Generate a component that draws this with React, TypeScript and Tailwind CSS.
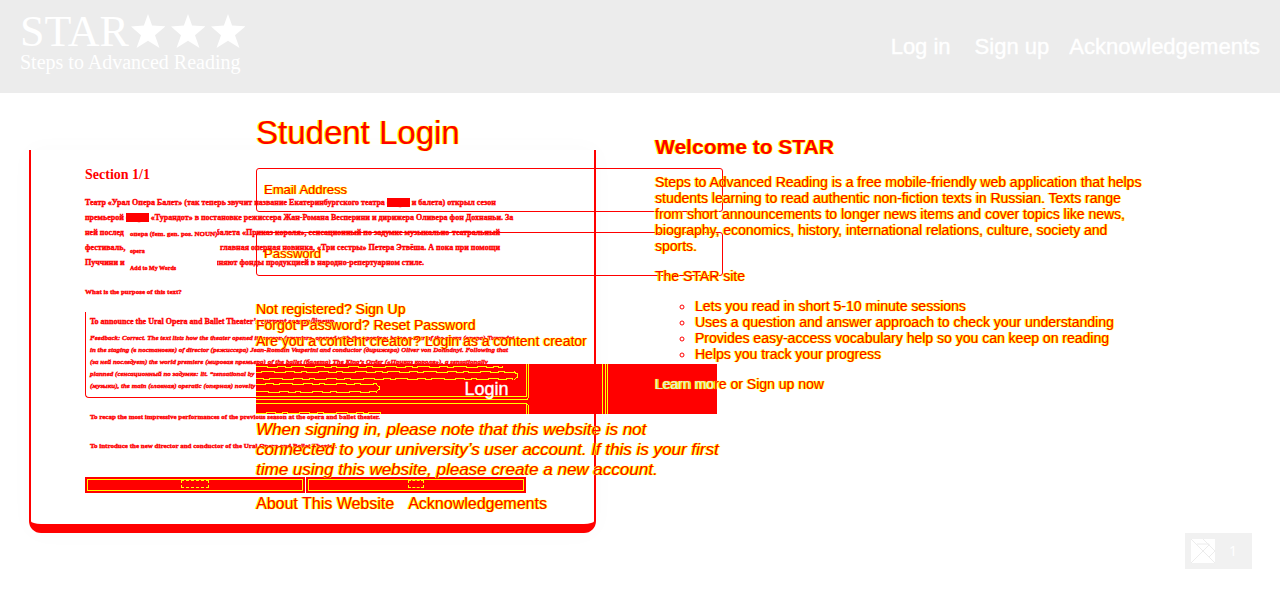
import React from "react";

const glow = "text-[#f00] [text-shadow:1px_0_0_#ff0,-1px_0_0_#ff0,0_0_1px_#ff0]";

function wave(y: number, from: number, to: number, seed: number) {
  let d = `M${from} ${y}`;
  let x = from;
  let i = seed;
  while (x < to) {
    const step = 4 + ((i * 7) % 9);
    const rise = i % 2 === 0 ? -1 : 1;
    x = Math.min(to, x + step);
    d += `H${x}l1 ${rise}`;
    x += 1;
    i += 1;
  }
  return d;
}

const contours = [
  wave(2.5, 0, 246, 1),
  wave(8.5, 0, 258, 4),
  "M258 8.5l3 1v4l-3 2",
  wave(14.5, 0, 257, 3),
  wave(20.5, 0, 120, 2),
  "M120 20.5l3 2v3l-3 2",
  wave(27.5, 0, 120, 5),
  wave(49.5, 0, 124, 6),
  "M0 32.5H270.5V0",
  "M0 35.5H271l1.500-2V0",
  "M0 39.5H270.5V50",
  "M270 39.5l2.500 2V50",
  "M346.500 0V50M349.500 0V50M351.500 0V50",
];

function Star() {
  return (
    <svg viewBox="0 0 34 34" className="h-[34px] w-[34px]" fill="#fff" aria-hidden="true">
      <path d="M17 0L21.100 11.500L34.500 12.400L24 21.200L28.500 34L17 26.700L5.500 34L10 21.200L0 12.400L12.900 11.500Z" />
    </svg>
  );
}

function Header() {
  return (
    <header className="flex h-[93px] items-start justify-between bg-[#ececec] px-5 text-white">
      <a href="#home" className="flex flex-col pt-[14px] font-['Liberation_Serif',serif]">
        <span className="flex items-start">
          <span className="w-[111px] text-[44px] leading-9">STAR</span>
          <span className="flex gap-[6px]">
            <Star />
            <Star />
            <Star />
          </span>
        </span>
        <span className="pt-[2px] text-[20px] leading-5">Steps to Advanced Reading</span>
      </a>
      <nav className="flex pt-[34px] text-[22px] leading-[26px] [-webkit-text-stroke:0.4px_#fff]">
        <a href="#login" className="pr-6">Log in</a>
        <a href="#signup" className="pr-5">Sign up</a>
        <a href="#acknowledgements">Acknowledgements</a>
      </nav>
    </header>
  );
}

function Reader() {
  return (
    <section className="mt-[57px] ml-[29px] h-[383px] w-[567px] shrink-0 rounded-b-xl border-x-2 border-b-[9px] border-[#f00] px-[54px] pt-4 font-['Liberation_Serif',serif] font-bold whitespace-nowrap text-[#f00] shadow-[0_0_24px_#fafafa]">
      <h2 className="text-[14px] leading-[18px]">Section 1/1</h2>
      <div className="relative pt-[11px] text-[8px] leading-[15px] [-webkit-text-stroke:0.4px_#f00]">
        <p>Театр «Урал Опера Балет» (так теперь звучит название Екатеринбургского театра <mark className="bg-[#f00] text-[#f00]">оперы</mark> и балета) открыл сезон</p>
        <p>премьерой <mark className="bg-[#f00] text-[#f00]">оперы</mark> «Турандот» в постановке режиссера Жан-Романа Весперини и дирижера Оливера фон Дохнаньи. За</p>
        <p className="flex justify-between pr-10"><span>ней послед</span><span>балета «Приказ короля», сенсационный по задумке музыкально-театральный</span></p>
        <p className="flex justify-between pr-10"><span>фестиваль,</span><span>главная оперная новинка, «Три сестры» Петера Этвёша. А пока при помощи</span></p>
        <p className="flex justify-between pr-[116px]"><span>Пуччини и</span><span>полняют фонды продукцией в народно-репертуарном стиле.</span></p>
        <div className="absolute top-[42px] left-[41px] h-[50px] w-[91px] bg-white pl-1 text-[6px] leading-[17px]">
          <p className="text-[7px]">опера (fem. gen. pos. NOUN)</p>
          <p>opera</p>
          <p>Add to My Words</p>
        </div>
      </div>
      <p className="pt-[15px] text-[7px] leading-[14px] [-webkit-text-stroke:0.4px_#f00]">What is the purpose of this text?</p>
      <div className="mt-[13px] h-[86px] w-[443px] rounded-bl-sm border-b border-l border-[#f00] pt-[3px] pl-1 text-[8px] leading-[12px] [-webkit-text-stroke:0.4px_#f00]">
        <p className="pb-[3px] leading-[14px]">To announce the Ural Opera and Ballet Theater’s current season/lineup.</p>
        <div className="text-[7px] italic">
          <p>Feedback: Correct. The text lists how the theater opened its season (premiere, opened with the opening: being a tour of the opera (опера) Turandot</p>
          <p>in the staging (в постановке) of director (режиссера) Jean-Romain Vesperini and conductor (дирижера) Oliver von Dohnányi. Following that</p>
          <p>(за ней последует) the world premiere (мировая премьера) of the ballet (балета) The King’s Order («Приказ короля»), a sensationally</p>
          <p>planned (сенсационный по задумке: lit. “sensational by</p>
          <p>(музыки), the main (главная) operatic (оперная) novelty</p>
        </div>
      </div>
      <div className="pt-3 pl-[5px] text-[7px] leading-[14px] [-webkit-text-stroke:0.4px_#f00]">
        <p className="pb-[15px]">To recap the most impressive performances of the previous season at the opera and ballet theater.</p>
        <p>To introduce the new director and conductor of the Ural Opera and Ballet Theater.</p>
      </div>
      <div className="flex gap-px pt-6">
        <button type="button" aria-label="Previous" className="flex h-4 w-[220px] justify-center bg-[#f00] p-[2px]">
          <span className="flex h-3 flex-1 justify-center border border-[#ff0]"><span className="h-2 w-7 border border-dashed border-[#ff0]" /></span>
        </button>
        <button type="button" aria-label="Next" className="flex h-4 w-[220px] justify-center bg-[#f00] p-[2px]">
          <span className="flex h-3 flex-1 justify-center border border-[#ff0]"><span className="h-2 w-4 border border-dashed border-[#ff0]" /></span>
        </button>
      </div>
    </section>
  );
}

function Welcome() {
  return (
    <section className={`relative z-20 ml-[59px] max-w-[496px] pt-[41px] text-[14px] leading-4 ${glow}`}>
      <h2 className="pb-[15px] text-[21px] leading-[25px] font-bold">Welcome to STAR</h2>
      <p>
        Steps to Advanced Reading is a free mobile-friendly web application that helps students learning to read authentic non-fiction texts in Russian. Texts range from short announcements to longer news items and cover topics like news, biography, economics, history, international relations, culture, society and sports.
      </p>
      <p className="py-[14px]">The STAR site</p>
      <ul className="list-[circle] pl-10">
        <li>Lets you read in short 5-10 minute sessions</li>
        <li>Uses a question and answer approach to check your understanding</li>
        <li>Provides easy-access vocabulary help so you can keep on reading</li>
        <li>Helps you track your progress</li>
      </ul>
      <p className="pt-[14px]">
        <a href="#about"><span className="text-[#e4e4e4]">Learn mo</span>re</a> or <a href="#signup">Sign up now</a>
      </p>
    </section>
  );
}

const field = "h-11 w-[calc(100%+6px)] rounded-[3px] border border-[#f00] bg-transparent px-[7px] pb-[2px] text-[13px] outline-none placeholder:text-[#f00] placeholder:opacity-100 [text-shadow:1px_0_0_#ff0,-1px_0_0_#ff0,0_0_1px_#ff0]";

function Login() {
  return (
    <section className={`ml-[20%] max-w-[461px] pt-[21px] ${glow}`}>
      <h1 className="text-[33px] leading-[38px]">Student Login</h1>
      <form className="flex flex-col" onSubmit={(e) => e.preventDefault()}>
        <label htmlFor="email" className="sr-only">Email Address</label>
        <input id="email" type="email" placeholder="Email Address" className={`mt-4 ${field}`} />
        <label htmlFor="password" className="sr-only">Password</label>
        <input id="password" type="password" placeholder="Password" className={`mt-5 ${field}`} />
        <div className="pt-[25px] pb-[15px] text-[14px] leading-4">
          <p>Not registered? <a href="#signup">Sign Up</a></p>
          <p>Forgot Password? <a href="#reset">Reset Password</a></p>
          <p>Are you a content creator? <a href="#creator">Login as a content creator</a></p>
        </div>
        <button type="submit" className="relative h-[50px] bg-[#f00] text-[18px] text-white [text-shadow:none] [-webkit-text-stroke:0.4px_#fff]">
          <svg viewBox="0 0 461 50" className="absolute inset-0 h-[50px] w-[461px]" fill="none" stroke="#ff0" strokeWidth="1" shapeRendering="crispEdges" aria-hidden="true">
            {contours.map((d) => (
              <path key={d} d={d} />
            ))}
          </svg>
          <span className="relative">Login</span>
        </button>
      </form>
      <p className="-mr-2 pt-[6px] text-[17px] leading-5 italic">
        When signing in, please note that this website is not connected to your university’s user account. If this is your first time using this website, please create a new account.
      </p>
      <footer className="flex gap-[14px] pt-[14px] text-[16px] leading-5">
        <a href="#about">About This Website</a>
        <a href="#acknowledgements">Acknowledgements</a>
      </footer>
    </section>
  );
}

function Counter() {
  return (
    <aside className="absolute right-7 bottom-7 flex h-9 w-[67px] items-center bg-[#f1f1f1] pl-[6px] text-white">
      <svg viewBox="0 0 24 24" className="h-6 w-6" fill="none" aria-hidden="true">
        <path d="M0 0h24v24H0z" fill="#fff" />
        <path d="M0 0l24 24M0 24L18 6V5H6M12 0l12 12-6 6" stroke="#ececec" />
      </svg>
      <span className="pl-[14px] font-['Noto_Sans',sans-serif] text-[14px] leading-5">1</span>
    </aside>
  );
}

export default function App() {
  return (
    <div className="relative min-h-screen bg-white font-['Liberation_Sans',Arial,sans-serif]">
      <Header />
      <main className="grid grid-cols-1">
        <div className="col-start-1 row-start-1 flex items-start">
          <Reader />
          <Welcome />
        </div>
        <div className="col-start-1 row-start-1">
          <Login />
        </div>
      </main>
      <Counter />
    </div>
  );
}
